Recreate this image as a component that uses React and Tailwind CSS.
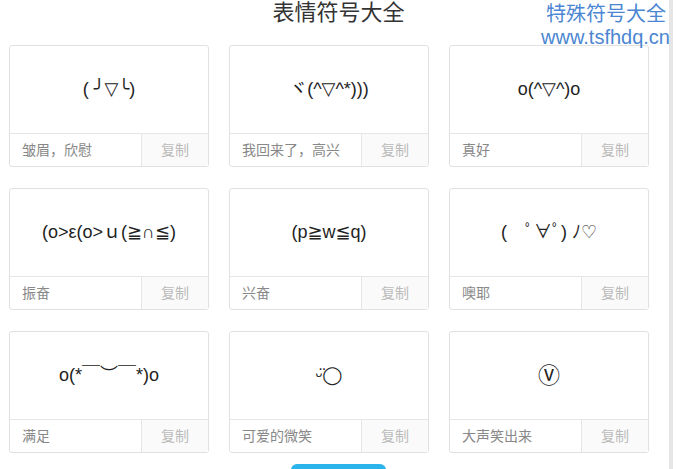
import React from "react";

const items = [
    { face: "( ╯▽╰)", label: "皱眉，欣慰" },
    { face: "ヾ(^▽^*)))", label: "我回来了，高兴" },
    { face: "o(^▽^)o", label: "真好" },
    { face: "(o>ε(o>ｕ(≧∩≦)", label: "振奋" },
    { face: "(p≧w≦q)", label: "兴奋" },
    { face: "(　ﾟ∀ﾟ) ﾉ♡", label: "噢耶" },
    { face: "o(*￣︶￣*)o", label: "满足" },
    { face: "ᵕ̈◯", label: "可爱的微笑" },
    { face: "Ⓥ", label: "大声笑出来", big: true },
];

const Card = ({ face, label, big }) => (
    <div className="w-[200px] h-[122px] border border-[#e1e1e1] rounded-[3px] flex flex-col bg-white">
        <div className={big ? "flex-1 flex items-center justify-center text-[22px] text-[#222]" : "flex-1 flex items-center justify-center text-[18px] text-[#222]"} style={{ fontFamily: '"Liberation Sans", "DejaVu Sans", "Noto Sans CJK SC", sans-serif' }}>
            {face}
        </div>
        <div className="h-[33px] shrink-0 border-t border-[#e6e6e6] flex text-[14px]">
            <div className="flex-1 flex items-center pl-[12px] text-[#888]">{label}</div>
            <div className="w-[67px] border-l border-[#e6e6e6] bg-[#fafafa] flex items-center justify-center text-[#bbb]">复制</div>
        </div>
    </div>
);

export default function App() {
    return (
        <div className="relative w-[677px] h-[469px] overflow-hidden bg-white flex" style={{ fontFamily: '"Liberation Sans", "Noto Sans CJK SC", sans-serif' }}>
            <div className="w-[669px] flex flex-col">
                <div className="h-[45px] shrink-0 flex justify-center pl-[8px]">
                    <h1 className="text-[22px] leading-[26px] text-[#333]">表情符号大全</h1>
                </div>
                <div className="grid shrink-0 grid-cols-[200px_200px_200px] gap-x-5 gap-y-[21px] pl-[9px]">
                    {items.map((it, i) => (
                        <Card key={i} face={it.face} label={it.label} big={it.big} />
                    ))}
                </div>
                <div className="flex shrink-0 justify-center mt-[11px] pl-[8px]">
                    <div className="w-[95px] h-[36px] rounded-[6px] bg-[#2bb4ec]"></div>
                </div>
            </div>
            <div className="w-[4px] bg-[#e6e6e6]"></div>
            <div className="absolute right-[11px] top-[1px] text-right text-[#4b86d2] text-[20px] leading-[24px] whitespace-nowrap">
                <div style={{ fontFamily: '"Noto Sans CJK SC", sans-serif' }}>特殊符号大全</div>
                <div className="-mr-[4px]">www.tsfhdq.cn</div>
            </div>
        </div>
    );
}
